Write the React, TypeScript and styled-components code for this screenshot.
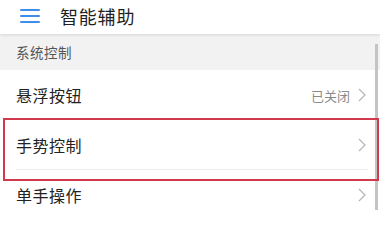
import React from 'react'
import styled, { createGlobalStyle } from 'styled-components'

const GlobalStyle = createGlobalStyle`
  html, body {
    margin: 0;
    padding: 0;
    background: #ffffff;
    font-family: "Noto Sans CJK SC", "Noto Sans", sans-serif;
  }
`

const Screen = styled.div`
  position: relative;
  width: 380px;
  height: 210px;
  overflow: hidden;
  background: #ffffff;
`

const Header = styled.header`
  position: relative;
  z-index: 1;
  display: flex;
  align-items: center;
  height: 34px;
  padding-left: 20px;
  background: #ffffff;
  box-shadow: 0 1px 3px rgba(0, 0, 0, 0.12);
`

const MenuIcon = styled.span`
  display: flex;
  flex-direction: column;
  justify-content: space-between;
  width: 20px;
  height: 14px;
  margin-top: -2px;

  i {
    display: block;
    height: 2px;
    background: #3f8de8;
    border-radius: 1px;
  }
`

const Title = styled.h1`
  margin: -3px 0 0 20px;
  font-size: 18px;
  font-weight: 400;
  color: #1f1f1f;
  letter-spacing: 0.8px;
`

const SectionLabel = styled.div`
  display: flex;
  align-items: center;
  height: 36px;
  padding: 0 16px;
  background: #f2f2f2;
  font-size: 13.5px;
  color: #555555;
  letter-spacing: 0.5px;
`

const Row = styled.div<{ $divider?: boolean }>`
  position: relative;
  display: flex;
  align-items: center;
  height: 50px;
  padding: 0 14px 0 16px;

  &::after {
    content: '';
    display: ${(p) => (p.$divider ? 'block' : 'none')};
    position: absolute;
    left: 16px;
    right: 12px;
    bottom: 0;
    height: 1px;
    background: #ececec;
  }
`

const RowLabel = styled.span`
  flex: 1;
  font-size: 16px;
  color: #222222;
  letter-spacing: 0.5px;
`

const RowValue = styled.span`
  margin-right: 8px;
  font-size: 13px;
  color: #8a8a8a;
`

const Highlight = styled.div`
  position: absolute;
  left: 3px;
  top: 118px;
  width: 372px;
  height: 59px;
  border: 2px solid #d2394d;
  pointer-events: none;
`

const Scrollbar = styled.div`
  position: absolute;
  right: 2px;
  top: 44px;
  bottom: 0;
  width: 3px;
  background: #c4c4c4;
`

function Chevron() {
  return (
    <svg width="8" height="14" viewBox="0 0 8 14">
      <path d="M1 1 L7 7 L1 13" fill="none" stroke="#b5b5b5" strokeWidth="1.2" />
    </svg>
  )
}

type Item = { label: string; value?: string }

const items: Item[] = [
  { label: '悬浮按钮', value: '已关闭' },
  { label: '手势控制' },
  { label: '单手操作' },
]

export default function App() {
  return (
    <Screen>
      <GlobalStyle />
      <Header>
        <MenuIcon>
          <i />
          <i />
          <i />
        </MenuIcon>
        <Title>智能辅助</Title>
      </Header>
      <SectionLabel>系统控制</SectionLabel>
      {items.map((item, i) => (
        <Row key={item.label} $divider={i < items.length - 1}>
          <RowLabel>{item.label}</RowLabel>
          {item.value && <RowValue>{item.value}</RowValue>}
          <Chevron />
        </Row>
      ))}
      <Scrollbar />
      <Highlight />
    </Screen>
  )
}
